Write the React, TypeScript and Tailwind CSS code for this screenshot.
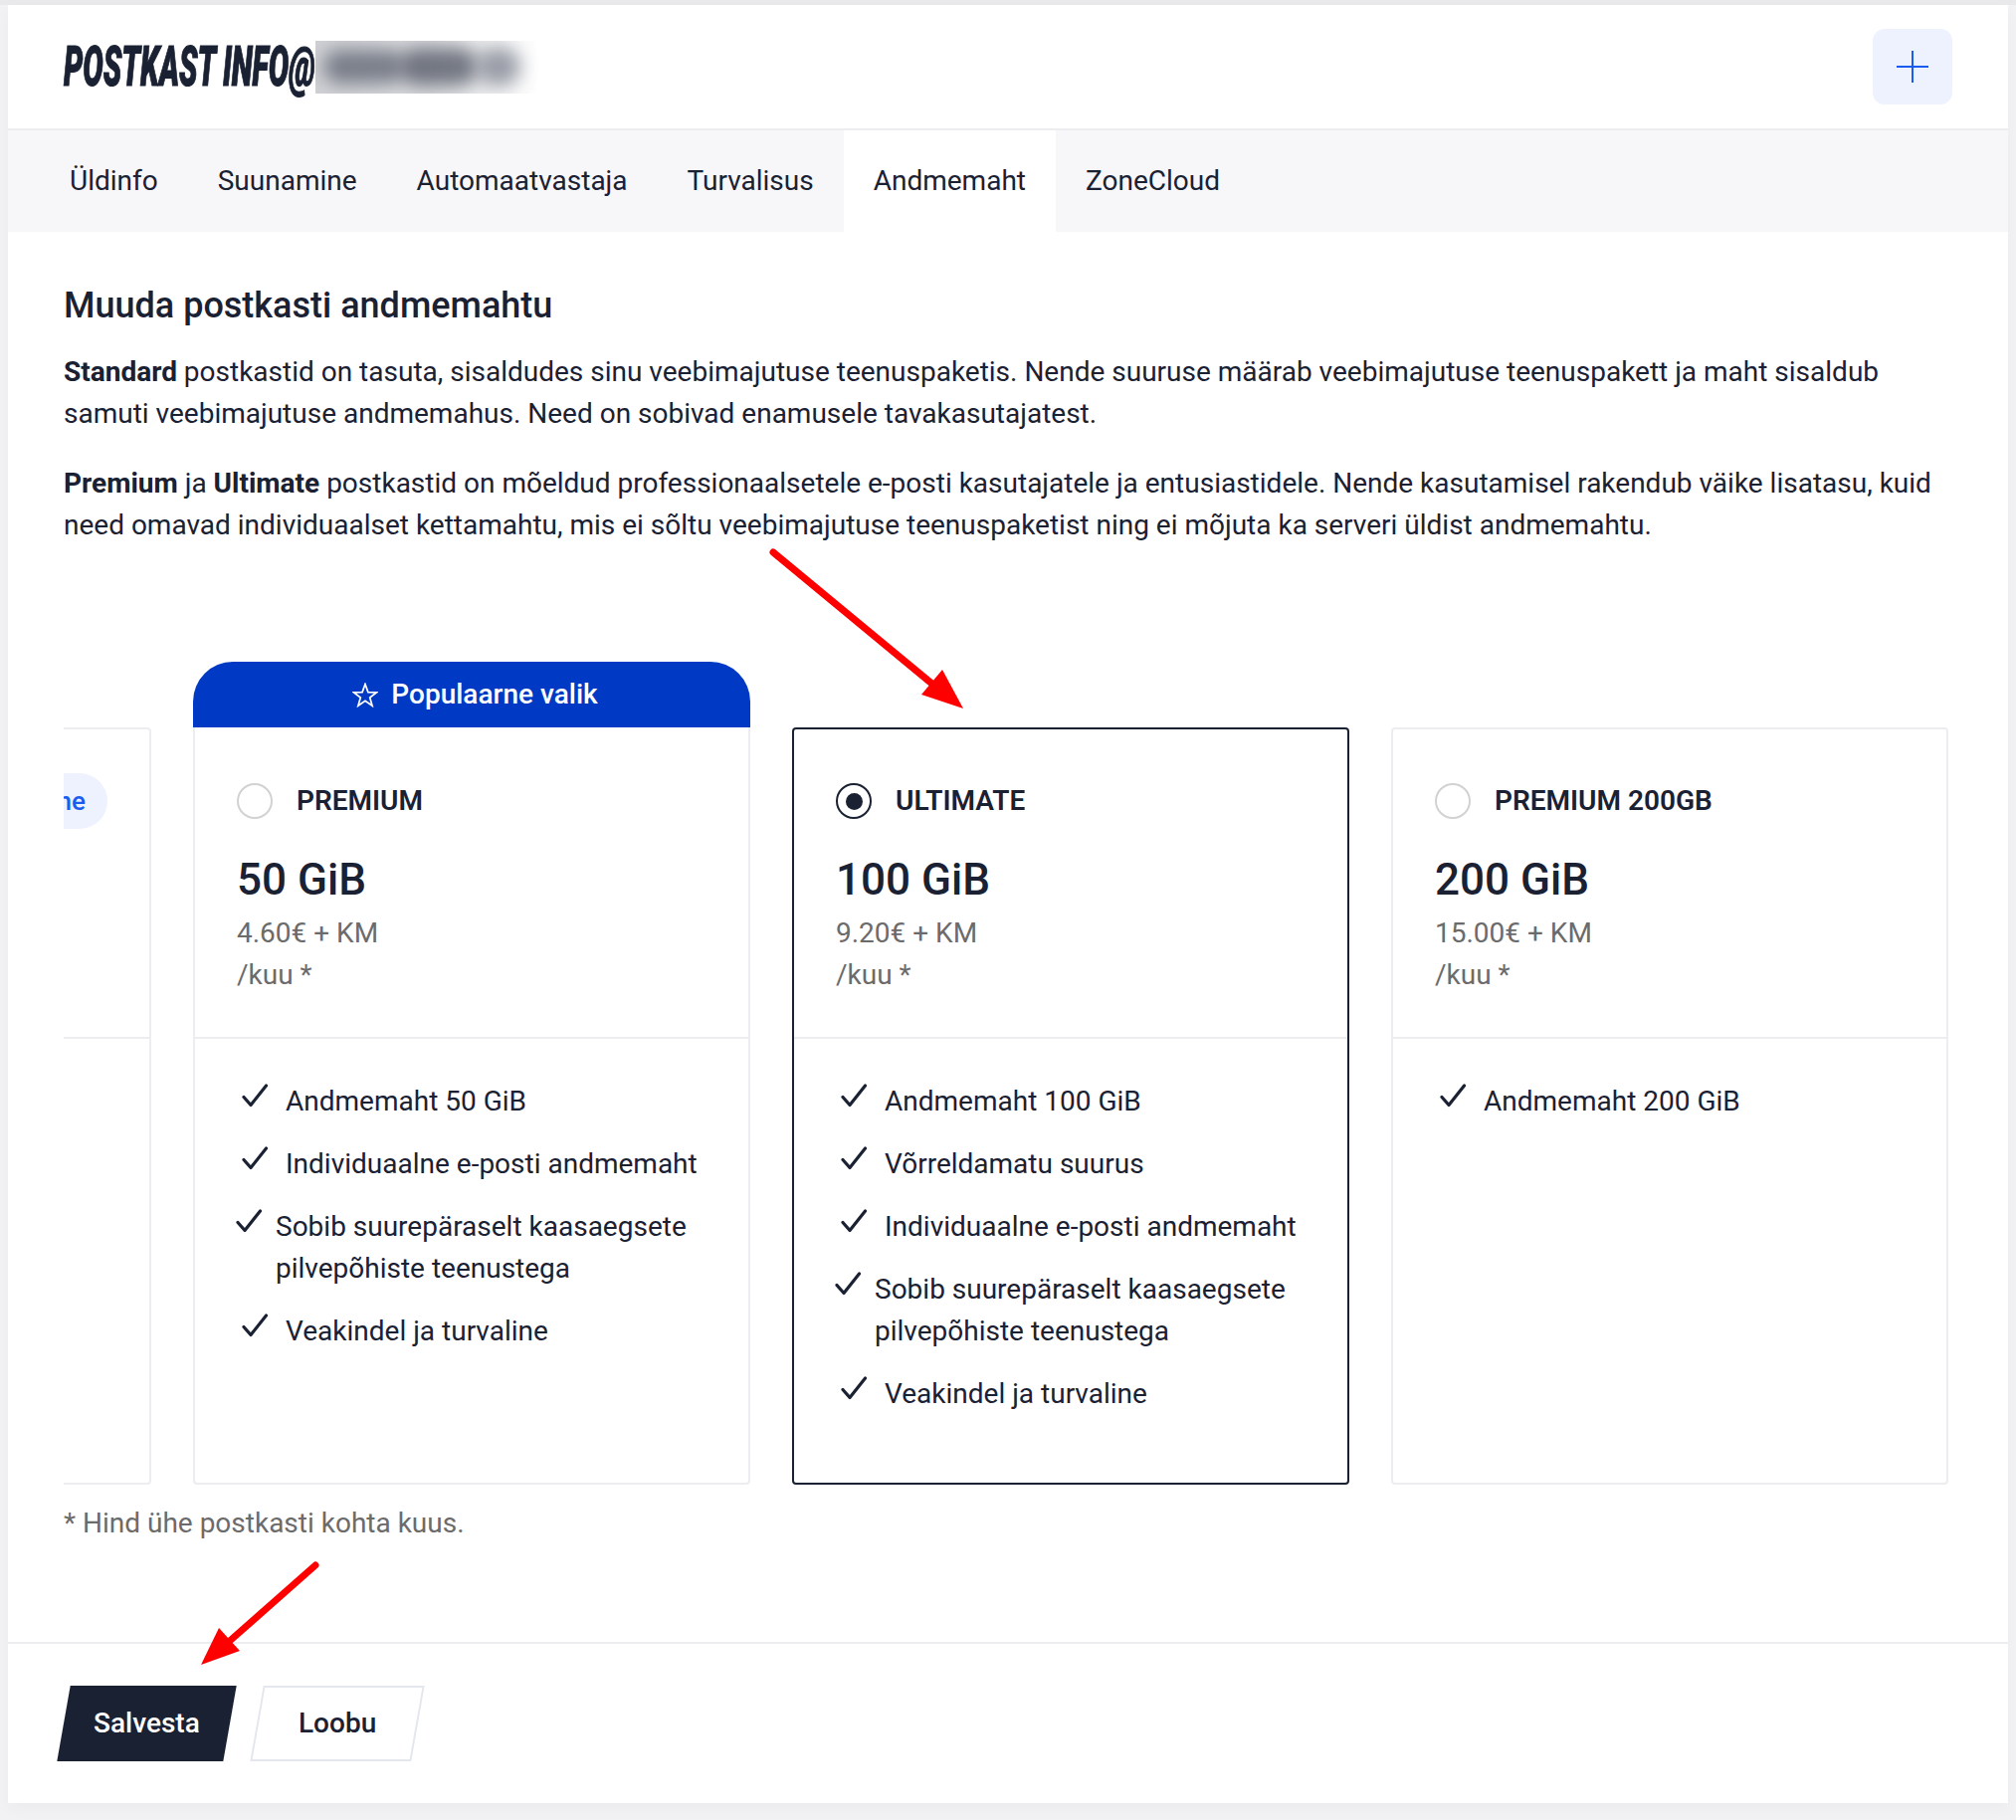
import { ReactNode } from "react";

type Feature = { text: string; wrapped?: boolean };

type Plan = {
  name: string;
  size: string;
  price: string;
  selected?: boolean;
  popular?: boolean;
  features: Feature[];
};

const plans: Plan[] = [
  {
    name: "PREMIUM",
    size: "50 GiB",
    price: "4.60€ + KM",
    popular: true,
    features: [
      { text: "Andmemaht 50 GiB" },
      { text: "Individuaalne e-posti andmemaht" },
      { text: "Sobib suurepäraselt kaasaegsete pilvepõhiste teenustega", wrapped: true },
      { text: "Veakindel ja turvaline" },
    ],
  },
  {
    name: "ULTIMATE",
    size: "100 GiB",
    price: "9.20€ + KM",
    selected: true,
    features: [
      { text: "Andmemaht 100 GiB" },
      { text: "Võrreldamatu suurus" },
      { text: "Individuaalne e-posti andmemaht" },
      { text: "Sobib suurepäraselt kaasaegsete pilvepõhiste teenustega", wrapped: true },
      { text: "Veakindel ja turvaline" },
    ],
  },
  {
    name: "PREMIUM 200GB",
    size: "200 GiB",
    price: "15.00€ + KM",
    features: [{ text: "Andmemaht 200 GiB" }],
  },
];

const tabs = ["Üldinfo", "Suunamine", "Automaatvastaja", "Turvalisus", "Andmemaht", "ZoneCloud"];

function CheckMark() {
  return (
    <svg width="26" height="24" viewBox="0 0 26 24" fill="none" className="shrink-0 mt-[3px]">
      <path d="M2 13.5 L9 21.5 L24.5 2" stroke="#1a2133" strokeWidth="3.2" strokeLinecap="round" strokeLinejoin="round" />
    </svg>
  );
}

function StarIcon() {
  return (
    <svg width="26" height="25" viewBox="0 0 26 25" fill="none">
      <polygon
        points="13,1.5 15.9,9.6 24.5,9.8 17.7,15 20.1,23.3 13,18.4 5.9,23.3 8.3,15 1.5,9.8 10.1,9.6"
        stroke="#ffffff"
        strokeWidth="1.7"
        strokeLinejoin="miter"
      />
    </svg>
  );
}

function Radio({ on }: { on?: boolean }) {
  return (
    <span
      className={`w-[36px] h-[36px] rounded-full border-2 flex items-center justify-center shrink-0 ${
        on ? "border-[#1a2133]" : "border-[#d2d2d2]"
      }`}
    >
      {on && <span className="w-[17px] h-[17px] rounded-full bg-[#1a2133]" />}
    </span>
  );
}

function PlanCard({ plan }: { plan: Plan }) {
  return (
    <div
      className={`relative w-[560px] h-[761px] shrink-0 bg-white border-2 ${
        plan.selected ? "border-[#1a2133] rounded-[4px]" : plan.popular ? "border-[#ececf1] border-t-0 rounded-b-[4px]" : "border-[#ececf1] rounded-[4px]"
      }`}
    >
      {plan.popular && (
        <div className="absolute left-[-2px] right-[-2px] top-[-66px] h-[66px] rounded-t-[40px] bg-[#003ac4] text-white flex items-center justify-center gap-[13px] pl-[7px] text-[28px] font-medium">
          <StarIcon />
          <span>Populaarne valik</span>
        </div>
      )}
      <div className={`px-[42px] pb-[41px] border-b-2 border-[#ececf1] ${plan.popular ? "pt-[56px]" : "pt-[54px]"}`}>
        <div className="flex items-center gap-[24px]">
          <Radio on={plan.selected} />
          <span className="text-[28px] font-semibold leading-[36px]">{plan.name}</span>
        </div>
        <div className="mt-[31px] text-[44px] font-medium leading-[60px]">{plan.size}</div>
        <div className="mt-[3px] text-[#6b6b6b]">{plan.price}</div>
        <div className="text-[#6b6b6b]">/kuu *</div>
      </div>
      <ul className="pt-[42px] px-[41px] flex flex-col gap-[21px]">
        {plan.features.map((f) => (
          <li key={f.text} className={`flex ${f.wrapped ? "gap-[14px]" : "pl-[6px] gap-[18px]"}`}>
            <CheckMark />
            <span>{f.text}</span>
          </li>
        ))}
      </ul>
    </div>
  );
}

function SkewButton({ dark, children }: { dark?: boolean; children: ReactNode }) {
  return (
    <button
      className={`h-[76px] -skew-x-[10deg] flex items-center justify-center font-medium ${
        dark ? "w-[167px] bg-[#1a2133] text-white" : "w-[162px] bg-white border-2 border-[#e5e7ee] text-[#1a2133]"
      }`}
    >
      <span className="skew-x-[10deg]">{children}</span>
    </button>
  );
}

export default function App() {
  return (
    <div
      className="relative h-[1829px] bg-[#f2f2f4] border-t-[5px] border-[#e9e9ec] px-[8px] text-[#1a2133] text-[28px] leading-[42px]"
      style={{ fontFamily: "Roboto, sans-serif" }}
    >
      <div className="w-[2010px] h-[1807px] bg-white flex flex-col shadow-[0_6px_14px_rgba(0,0,0,0.03)]">
        <header className="h-[124px] flex items-center justify-between pl-[56px] pr-[56px]">
          <div className="flex items-center">
            <span className="inline-block w-[253px] text-[56px] leading-[60px] font-black italic whitespace-nowrap origin-left scale-x-[0.545] [-webkit-text-stroke:1.2px_#1a2133]">
              POSTKAST INFO@
            </span>
            <div className="w-[225px] h-[53px] overflow-hidden bg-gradient-to-r from-[#cfd0d4] via-[#dcdde0] to-white flex items-center">
              <span className="ml-[8px] w-[82px] h-[34px] rounded-full bg-[#5c6270] blur-[9px] opacity-75" />
              <span className="ml-[-6px] w-[80px] h-[38px] rounded-full bg-[#4f5462] blur-[9px] opacity-75" />
              <span className="ml-[-2px] w-[44px] h-[38px] rounded-full bg-[#7c818e] blur-[9px] opacity-75" />
            </div>
          </div>
          <button className="w-[80px] h-[76px] rounded-[12px] bg-[#eef2fe] flex items-center justify-center">
            <svg width="34" height="34" viewBox="0 0 34 34">
              <path d="M17 1 V33 M1 17 H33" stroke="#1a5cf0" strokeWidth="2" />
            </svg>
          </button>
        </header>

        <nav className="h-[104px] border-t-2 border-[#ececf1] bg-[#f7f7fa] flex pl-[32px]">
          {tabs.map((t) => (
            <div
              key={t}
              className={`px-[30px] flex items-center ${t === "Andmemaht" ? "bg-white" : ""}`}
            >
              {t}
            </div>
          ))}
        </nav>

        <main className="pl-[56px] pr-[57px] pt-[49px]">
          <h1 className="text-[36px] font-medium leading-[50px]">Muuda postkasti andmemahtu</h1>
          <p className="mt-[21px]">
            <b className="font-bold">Standard</b> postkastid on tasuta, sisaldudes sinu veebimajutuse teenuspaketis. Nende suuruse määrab veebimajutuse teenuspakett ja maht sisaldub samuti veebimajutuse andmemahus. Need on sobivad enamusele tavakasutajatest.
          </p>
          <p className="mt-[28px]">
            <b className="font-bold">Premium</b> ja <b className="font-bold">Ultimate</b> postkastid on mõeldud professionaalsetele e-posti kasutajatele ja entusiastidele. Nende kasutamisel rakendub väike lisatasu, kuid need omavad individuaalset kettamahtu, mis ei sõltu veebimajutuse teenuspaketist ning ei mõjuta ka serveri üldist andmemahtu.
          </p>

          <div className="mt-[116px] pt-[66px] overflow-hidden">
            <div className="flex gap-[42px] ml-[-472px]">
              <div className="relative w-[560px] h-[761px] shrink-0 border-2 border-[#ececf1] rounded-[4px]">
                <div className="h-[311px] border-b-2 border-[#ececf1] flex justify-end items-start pt-[44px] pr-[42px]">
                  <span className="h-[56px] px-[22px] rounded-full bg-[#eef2fe] text-[#1a5cf0] font-medium text-[26px] flex items-center">
                    Aktiivne
                  </span>
                </div>
              </div>
              {plans.map((p) => (
                <PlanCard key={p.name} plan={p} />
              ))}
            </div>
          </div>

          <p className="mt-[18px] text-[#6b6b6b]">* Hind ühe postkasti kohta kuus.</p>
        </main>

        <footer className="mt-auto border-t-2 border-[#ececf1] pt-[42px] pb-[42px] pl-[56px] flex gap-[27px]">
          <SkewButton dark>Salvesta</SkewButton>
          <SkewButton>Loobu</SkewButton>
        </footer>
      </div>

      {/* annotation arrows drawn over the page */}
      <svg className="absolute top-[-5px] left-0 pointer-events-none" width="2026" height="1829" viewBox="0 0 2026 1829" fill="none">
        <path d="M777 555 L945 694" stroke="#ff0000" strokeWidth="7" strokeLinecap="round" />
        <polygon points="968,712 947,673 926,698" fill="#ff0000" />
        <path d="M317 1573 L232 1648" stroke="#ff0000" strokeWidth="7" strokeLinecap="round" />
        <polygon points="202,1673 220,1636 241,1659" fill="#ff0000" />
      </svg>
    </div>
  );
}
